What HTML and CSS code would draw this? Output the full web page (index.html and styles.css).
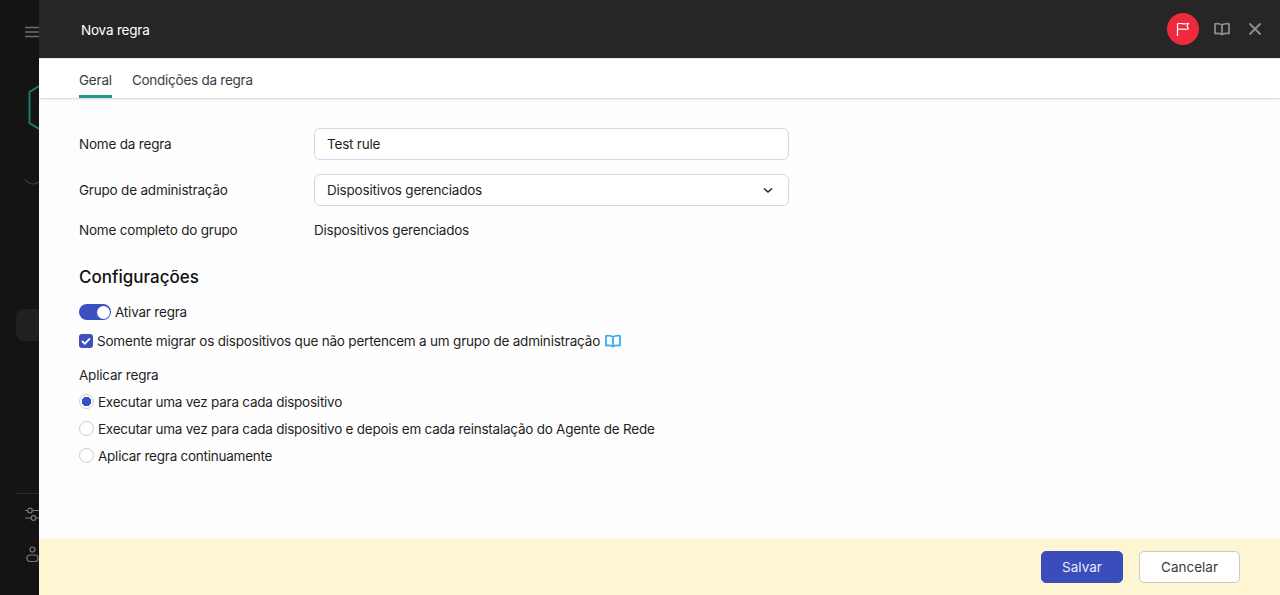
FILE: index.html
```html
<!DOCTYPE html>
<html lang="pt">
<head>
<meta charset="utf-8">
<title>Nova regra</title>
<link rel="stylesheet" href="styles.css">
</head>
<body>
<div class="app">
  <aside class="side">
    <svg class="s-menu" width="14" height="12" viewBox="0 0 14 12"><path d="M0 1.500h14M0 6h14M0 10.500h14" stroke="#6e6e6e" stroke-width="1.500" fill="none"/></svg>
    <svg class="s-logo" width="11" height="46" viewBox="0 0 11 46"><path d="M11 1 1.500 7V38l9.500 6" stroke="#1a7d6c" stroke-width="2" fill="none"/></svg>
    <svg class="s-wave" width="14" height="8" viewBox="0 0 14 8"><path d="M0 1c2 3 5 5 8 5s4-1 6-2" stroke="#263f69" stroke-width="1.200" fill="none"/></svg>
    <div class="s-active"></div>
    <div class="s-spacer"></div>
    <div class="s-line"></div>
    <svg class="s-tune" width="14" height="16" viewBox="0 0 14 16"><g stroke="#7a7a7a" stroke-width="1.200" fill="none"><path d="M0 3.500h2.500M7.500 3.500h6.500M0 11h6M11 11h3"/><circle cx="5" cy="3.500" r="2.300"/><circle cx="8.500" cy="11" r="2.300"/></g></svg>
    <svg class="s-user" width="14" height="17" viewBox="0 0 14 17"><g stroke="#7a7a7a" stroke-width="1.200" fill="none"><circle cx="6.500" cy="3.500" r="2.500"/><rect x="1" y="9" width="11" height="6.500" rx="3"/></g></svg>
  </aside>
  <main class="drawer">
    <header class="head">
      <h1 class="title">Nova regra</h1>
      <div class="head-tools">
        <span class="flag">
          <svg width="16" height="16" viewBox="0 0 16 16"><path d="M2.500 15V2.800C6 1.500 9 4.200 13.500 2.200L12 5.300l1.500 2.500C9.500 9.500 6 7 2.500 8.500" stroke="#fff" stroke-width="1.200" fill="none" stroke-linejoin="round"/></svg>
        </span>
        <svg class="tool" width="16" height="14" viewBox="0 0 16 14"><path d="M8 3C6.500 1.800 4 1.500 1 1.800V11.500c3-.3 5.500 0 7 1 1.500-1 4-1.300 7-1V1.800C12 1.500 9.500 1.800 8 3Zm0 0V12.500" stroke="#8c8c8c" stroke-width="1.800" fill="none" stroke-linejoin="round"/></svg>
        <svg class="tool" width="14" height="14" viewBox="0 0 14 14"><path d="M1.500 1.500l11 11M12.500 1.500l-11 11" stroke="#8c8c8c" stroke-width="2" fill="none"/></svg>
      </div>
    </header>
    <nav class="tabs">
      <a class="tab tab-on">Geral</a>
      <a class="tab">Condições da regra</a>
    </nav>
    <section class="body">
      <form class="form">
        <div class="row row-field">
          <label class="lbl">Nome da regra</label>
          <div class="input">Test rule</div>
        </div>
        <div class="row row-field">
          <label class="lbl">Grupo de administração</label>
          <div class="input select">Dispositivos gerenciados
            <svg class="chev" width="10" height="7" viewBox="0 0 10 7"><path d="M1 1.500 5 5l4-3.500" stroke="#222" stroke-width="1.500" fill="none"/></svg>
          </div>
        </div>
        <div class="row row-static">
          <span class="lbl">Nome completo do grupo</span>
          <span>Dispositivos gerenciados</span>
        </div>
        <h2 class="sub">Configurações</h2>
        <div class="line toggle-line">
          <span class="toggle"><span class="knob"></span></span>
          <span>Ativar regra</span>
        </div>
        <div class="line check-line">
          <span class="check">
            <svg width="10" height="8" viewBox="0 0 10 8"><path d="M1 4l2.800 2.700L9 1.300" stroke="#fff" stroke-width="1.800" fill="none"/></svg>
          </span>
          <span>Somente migrar os dispositivos que não pertencem a um grupo de administração</span>
          <svg class="book" width="16" height="14" viewBox="0 0 16 14"><path d="M8 3C6.500 1.800 4 1.500 1 1.800V11.500c3-.3 5.500 0 7 1 1.500-1 4-1.300 7-1V1.800C12 1.500 9.500 1.800 8 3Zm0 0V12.500" stroke="#35b0f0" stroke-width="1.800" fill="none" stroke-linejoin="round"/></svg>
        </div>
        <div class="apply">Aplicar regra</div>
        <div class="line radio-line"><span class="radio radio-on"></span><span>Executar uma vez para cada dispositivo</span></div>
        <div class="line radio-line"><span class="radio"></span><span>Executar uma vez para cada dispositivo e depois em cada reinstalação do Agente de Rede</span></div>
        <div class="line radio-line"><span class="radio"></span><span>Aplicar regra continuamente</span></div>
      </form>
    </section>
    <footer class="foot">
      <button class="btn btn-main" type="button">Salvar</button>
      <button class="btn" type="button">Cancelar</button>
    </footer>
  </main>
</div>
</body>
</html>
```
FILE: styles.css
```css
* { box-sizing: border-box; }
html, body { margin: 0; height: 100%; }
body {
  font-family: "Inter", "Liberation Sans", sans-serif;
  font-size: 13.500px;
  letter-spacing: -0.2px;
  color: #1f1f1f;
  overflow: hidden;
}
.app { display: flex; height: 595px; width: 1280px; }
.side {
  width: 39px;
  flex: none;
  background: #141414;
  display: flex;
  flex-direction: column;
  align-items: flex-start;
  overflow: hidden;
  padding-top: 26px;
}
.side svg { flex: none; display: block; }
.s-menu { margin-left: 25px; }
.s-logo { margin: 47px 0 0 28px; }
.s-wave { margin: 47px 0 0 25px; }
.s-active {
  flex: none;
  width: 40px;
  height: 32px;
  margin: 123px 0 0 16px;
  background: #202020;
  border-radius: 8px;
}
.s-spacer { height: 152px; flex: none; }
.s-line { flex: none; width: 23px; height: 1px; margin-left: 16px; background: #2c2c2c; }
.s-tune { margin: 13px 0 0 25px; }
.s-user { margin: 23px 0 0 26px; }

.drawer {
  flex: 1;
  min-width: 0;
  display: flex;
  flex-direction: column;
  background: #fdfdfd;
}
.head {
  height: 58px;
  flex: none;
  background: #262626;
  color: #fff;
  display: flex;
  align-items: center;
  justify-content: space-between;
  padding: 0 18px 0 42px;
}
.title { margin: 2px 0 0; font-size: 13.500px; font-weight: 400; }
.head-tools { display: flex; align-items: center; }
.flag {
  width: 32px;
  height: 32px;
  border-radius: 50%;
  background: #f0293e;
  display: flex;
  align-items: center;
  justify-content: center;
  margin-right: 15px;
}
.tool + .tool { margin-left: 18px; }
.tabs {
  height: 40px;
  flex: none;
  display: flex;
  gap: 20px;
  padding-left: 40px;
  background: #fff;
  border-top: 1px solid #e4e4e4;
  box-shadow: 0 1px 2px rgba(0,0,0,.16);
  position: relative;
}
.tab {
  height: 39px;
  line-height: 42px;
  color: #3c3c3c;
  font-size: 13.500px;
  letter-spacing: -0.25px;
}
.tab-on { border-bottom: 3px solid #1d9a85; letter-spacing: -0.2px; }
.body { flex: 1; padding: 30px 40px 0; min-height: 0; }
.form { background: #fefefe; height: 339px; }
.row { display: flex; align-items: center; }
.row-field { height: 32px; margin-bottom: 14px; }
.lbl { width: 235px; flex: none; }
.input {
  width: 475px;
  height: 32px;
  background: #fff;
  border: 1px solid #d5d9de;
  border-radius: 6px;
  padding: 0 12px;
  display: flex;
  align-items: center;
  justify-content: space-between;
}
.chev { margin-right: 3px; }
.row-static { height: 20px; margin-top: 0; }
.sub { margin: 26px 0 0; font-size: 17px; font-weight: 500; line-height: 22px; color: #111; letter-spacing: 0; }
.line { display: flex; align-items: center; }
.toggle-line { height: 20px; margin-top: 14px; gap: 4px; }
.toggle {
  width: 32px;
  height: 16px;
  border-radius: 8px;
  background: #3b4fc0;
  position: relative;
  flex: none;
}
.knob {
  position: absolute;
  right: 1.500px;
  top: 1.500px;
  width: 13px;
  height: 13px;
  background: #fff;
  border-radius: 50%;
}
.check-line { height: 20px; margin-top: 9px; gap: 4px; }
.check {
  width: 14px;
  height: 14px;
  background: #3b4fc0;
  border-radius: 3px;
  display: flex;
  align-items: center;
  justify-content: center;
  flex: none;
}
.book { margin-left: 1px; }
.apply { margin-top: 14px; height: 20px; line-height: 20px; }
.radio-line { height: 27px; gap: 4px; letter-spacing: -0.24px; }
.apply + .radio-line { margin-top: 3px; }
.radio {
  width: 15px;
  height: 15px;
  border-radius: 50%;
  border: 1px solid #c8ccd2;
  background: #fff;
  flex: none;
}
.radio-on {
  background: radial-gradient(circle, #3b4fc0 0 4.500px, #fff 5px);
}
.foot {
  height: 56px;
  flex: none;
  background: #fef5d2;
  display: flex;
  align-items: center;
  justify-content: flex-end;
  gap: 16px;
  padding-right: 40px;
}
.btn {
  font: inherit;
  letter-spacing: 0;
  height: 32px;
  width: 101px;
  background: #fff;
  border: 1px solid #c9c9c9;
  border-radius: 5px;
  color: #3a3a3a;
  padding: 0;
}
.btn-main {
  width: 82px;
  background: #3a4dbb;
  border-color: #3a4dbb;
  color: #e8ebff;
}
```
